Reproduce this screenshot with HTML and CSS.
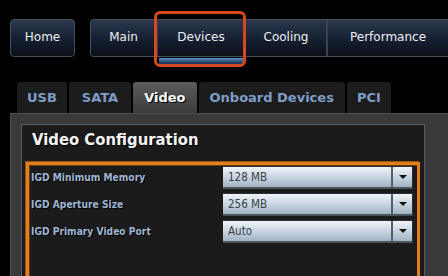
FILE: index.html
```html
<!DOCTYPE html>
<html lang="en">
<head>
  <meta charset="UTF-8">
  <meta name="viewport" content="width=device-width, initial-scale=1.0">
  <title>BIOS Setup - Devices</title>
  <link rel="stylesheet" href="styles.css">
</head>
<body>
  <header class="topbar">
    <a class="nav-btn home">Home</a>
    <nav class="nav-group">
      <a class="nav-btn">Main</a>
      <a class="nav-btn active">Devices<span class="highlight"></span></a>
      <a class="nav-btn">Cooling</a>
      <a class="nav-btn">Performance</a>
    </nav>
  </header>

  <div class="tabs">
    <a class="tab">USB</a>
    <a class="tab">SATA</a>
    <a class="tab active">Video</a>
    <a class="tab">Onboard Devices</a>
    <a class="tab">PCI</a>
  </div>

  <section class="panel">
    <div class="config">
      <h2>Video Configuration</h2>
      <div class="settings">
        <label>IGD Minimum Memory</label>
        <div class="select"><span class="value">128 MB</span><span class="arrow"></span></div>

        <label>IGD Aperture Size</label>
        <div class="select"><span class="value">256 MB</span><span class="arrow"></span></div>

        <label>IGD Primary Video Port</label>
        <div class="select"><span class="value">Auto</span><span class="arrow"></span></div>
      </div>
    </div>
  </section>
</body>
</html>
```

FILE: styles.css
```css
* {
  box-sizing: border-box;
}

body {
  margin: 0;
  background: #000;
  font-family: 'DejaVu Sans', sans-serif;
  overflow: hidden;
}

.topbar {
  display: flex;
  align-items: flex-start;
  padding: 19px 0 0 10px;
}

.nav-btn {
  display: flex;
  align-items: center;
  justify-content: center;
  height: 36px;
  padding: 0 0 3px;
  font-size: 12px;
  color: #eceff4;
  background: linear-gradient(#2a3850, #161f30 55%, #0b0f18);
  position: relative;
}

.home {
  height: 38px;
  width: 65px;
  border: 1px solid #454c5c;
  border-radius: 4px;
  margin-right: 15px;
}

.nav-group {
  display: flex;
  flex: 1;
  border: 1px solid #454c5c;
  border-right: 0;
  border-radius: 4px 0 0 4px;
  background: #0b0f18;
}

.nav-group .nav-btn {
  width: 82px;
}

.nav-group .nav-btn + .nav-btn {
  border-left: 2px solid #3a4150;
}

.nav-group .nav-btn:first-child {
  border-radius: 3px 0 0 3px;
  width: 65px;
}

.nav-btn.active {
  width: 88px;
}

.nav-btn.active::after {
  content: '';
  position: absolute;
  left: 1px;
  right: 1px;
  bottom: -8px;
  height: 6px;
  background: linear-gradient(#5a94c8, #2a5078 60%, #1a3048);
}

.nav-group .nav-btn:last-child {
  flex: 1;
}

.highlight {
  position: absolute;
  left: -4px;
  top: -9px;
  right: -2px;
  bottom: -11px;
  border: 3px solid #d8461f;
  border-radius: 6px;
  z-index: 2;
}

.tabs {
  display: flex;
  gap: 2px;
  margin-top: 25px;
  padding-left: 17px;
}

.tab {
  display: flex;
  align-items: center;
  height: 31px;
  padding: 0 10px;
  font-size: 13px;
  font-weight: bold;
  color: #7d9ec6;
  background: #1c1c1c;
  border-radius: 3px 3px 0 0;
}

.tab:nth-child(2) {
  padding: 0 13px;
}

.tab:nth-child(4) {
  padding: 0 11px;
}

.tab.active {
  padding: 0 11px;
  color: #fff;
  text-shadow: 1px 1px 0 #000;
  background: linear-gradient(#5c5c5c, #3b3b3b);
}

.panel {
  margin-left: 10px;
  height: 170px;
  background: #3a3a3a;
  border-top: 1px solid #4c4e54;
  border-left: 1px solid #4c4e54;
  padding: 10px 0 0 10px;
}

.config {
  width: 404px;
  height: 100%;
  background: #1b1b1b;
  border: 1px solid #555c6c;
  border-bottom: 0;
}

.config h2 {
  margin: 0;
  padding: 5px 10px 13px;
  font-family: 'DejaVu Sans Condensed', 'DejaVu Sans', sans-serif;
  font-stretch: condensed;
  font-size: 16.5px;
  line-height: 19px;
  color: #f4f4f4;
  text-shadow: 1px 1px 0 #000;
}

.settings {
  display: grid;
  grid-template-columns: 1fr 190px;
  row-gap: 4px;
  align-items: center;
  align-content: start;
  margin: 0 4px;
  height: 120px;
  padding: 1px 4px 0 2px;
  border: 3px solid #e27f1d;
  border-bottom: 0;
  box-shadow: inset 1px 1px 0 #6e380c, -1px -1px 0 #9a5212;
  font-family: 'DejaVu Sans Condensed', 'DejaVu Sans', sans-serif;
  font-stretch: condensed;
}

.settings label {
  font-size: 10.2px;
  font-weight: bold;
  color: #9fb5d2;
  text-shadow: 1px 1px 0 #000;
}

.select {
  display: flex;
  height: 23px;
  background: linear-gradient(#f0f4f8, #c9d5e1 50%, #a3b3c4);
  border-top: 1px solid #2a2f36;
  border-bottom: 2px solid #4a545e;
  border-right: 1px solid #2a2f36;
}

.value {
  flex: 1;
  display: flex;
  align-items: center;
  padding-left: 5px;
  font-size: 11.5px;
  color: #39414a;
}

.arrow {
  width: 21px;
  border-left: 2px solid #555f69;
  display: flex;
  align-items: center;
  justify-content: center;
}

.arrow::after {
  content: '';
  border-left: 4px solid transparent;
  border-right: 4px solid transparent;
  border-top: 4px solid #111;
}
```
